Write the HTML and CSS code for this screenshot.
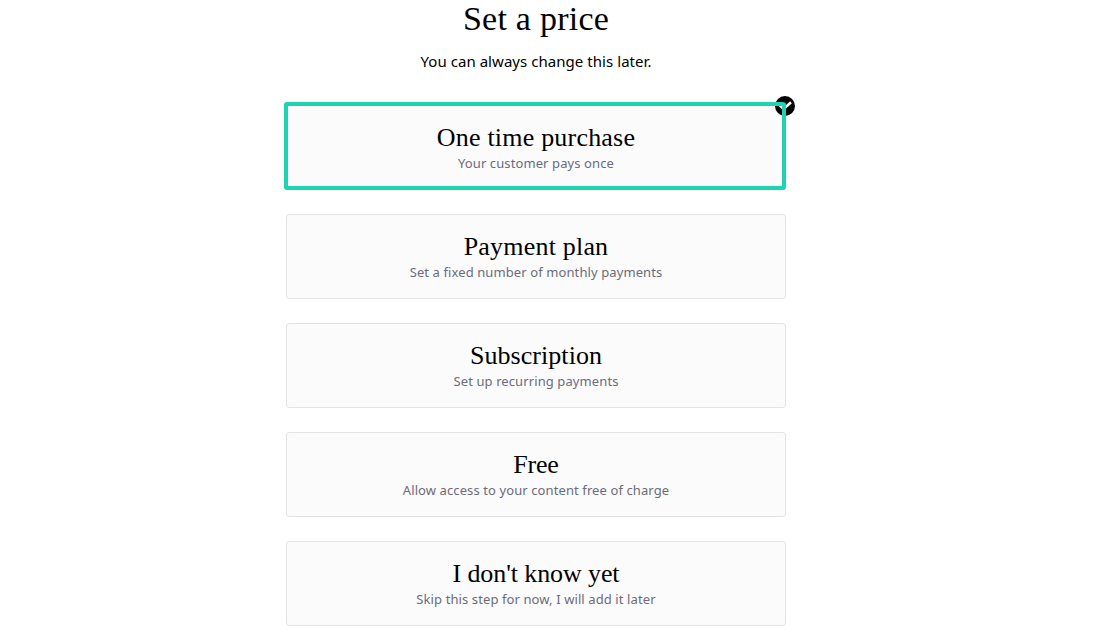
FILE: index.html
```html
<!DOCTYPE html>
<html lang="en">
<head>
<meta charset="utf-8">
<title>Set a price</title>
<link rel="stylesheet" href="styles.css">
</head>
<body>
<main class="pricing">
  <h1 class="title">Set a price</h1>
  <p class="lead">You can always change this later.</p>
  <div class="options">
    <button class="card selected">
      <svg class="badge" viewBox="0 0 20 20"><circle cx="10" cy="10" r="10"/><path d="M4.7 9.3L8.6 13L16 6.2"/></svg>
      <span class="name">One time purchase</span>
      <span class="note">Your customer pays once</span>
    </button>
    <button class="card">
      <span class="name">Payment plan</span>
      <span class="note">Set a fixed number of monthly payments</span>
    </button>
    <button class="card">
      <span class="name subscription">Subscription</span>
      <span class="note">Set up recurring payments</span>
    </button>
    <button class="card">
      <span class="name free">Free</span>
      <span class="note">Allow access to your content free of charge</span>
    </button>
    <button class="card">
      <span class="name skip">I don't know yet</span>
      <span class="note">Skip this step for now, I will add it later</span>
    </button>
  </div>
</main>
</body>
</html>
```
FILE: styles.css
```css
* { box-sizing: border-box; }
body { margin: 0; background: #fff; overflow: hidden; font-family: "Noto Sans", "Open Sans", sans-serif; color: #000; }
.pricing { width: 500px; margin-left: 286px; text-align: center; }
.title { height: 50px; margin: 0; font: 400 34px/38px "Liberation Serif", serif; letter-spacing: 0.25px; }
.lead { height: 55px; margin: 0; font-size: 15px; line-height: 23px; letter-spacing: 0.05px; }
.options { display: flex; flex-direction: column; gap: 24px; }
.card { position: relative; width: 500px; height: 85px; padding: 16px 0 0; border: 1px solid #e4e4e4; border-radius: 3px; background: #fbfbfb; display: flex; flex-direction: column; align-items: center; justify-content: flex-start; }
.name { font: 26px/32px "Liberation Serif", serif; color: #000; letter-spacing: 0.2px; }
.subscription { letter-spacing: 0.05px; }
.free { letter-spacing: -0.2px; }
.skip { letter-spacing: -0.1px; }
.note { margin-top: -1px; font: 13px/20px "Noto Sans", "Open Sans", sans-serif; color: #6b6b7b; letter-spacing: 0.1px; }
.selected::after { content: ""; box-sizing: border-box; position: absolute; left: -3px; top: -4px; width: 502px; height: 88px; border: 4px solid #1dd3b0; border-radius: 3px; }
.badge { position: absolute; width: 20px; height: 20px; right: -10px; top: -10px; }
.badge path { fill: none; stroke: #fff; stroke-width: 2.6; }
```
